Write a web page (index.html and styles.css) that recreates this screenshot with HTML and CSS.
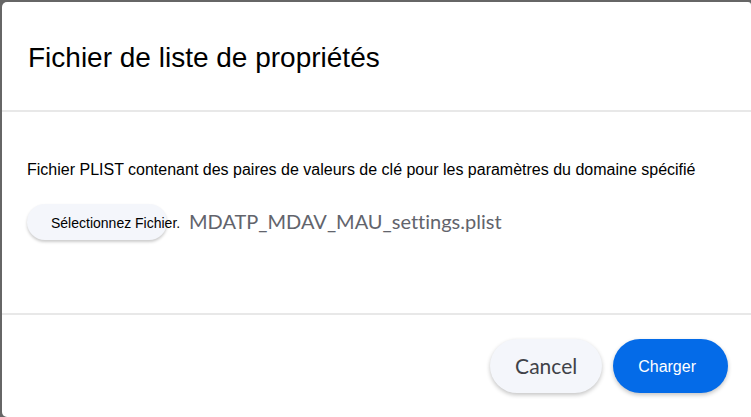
FILE: index.html
```html
<!DOCTYPE html>
<html lang="fr">
<head>
<meta charset="utf-8">
<title>Fichier de liste de propriétés</title>
<link rel="stylesheet" href="styles.css">
</head>
<body>
<main class="dialog" role="dialog" aria-labelledby="title">
  <header class="dialog-header">
    <h1 class="dialog-title" id="title">Fichier de liste de propriétés</h1>
  </header>
  <section class="dialog-body">
    <p class="description" id="description">Fichier PLIST contenant des paires de valeurs de clé pour les paramètres du domaine spécifié</p>
    <div class="file-row">
      <button class="file-button" type="button" aria-describedby="description">Sélectionnez Fichier.</button>
      <span class="file-name">MDATP_MDAV_MAU_settings.plist</span>
    </div>
  </section>
  <footer class="dialog-footer">
    <button class="button button-cancel" type="button">Cancel</button>
    <button class="button button-primary" type="button">Charger</button>
  </footer>
</main>
</body>
</html>
```
FILE: styles.css
```css
* {
  box-sizing: border-box;
}

body {
  margin: 0;
  min-height: 100vh;
  padding: 2px 0 0 2px;
  display: flex;
  background: #666;
  font-family: "Liberation Sans", Arial, sans-serif;
  color: #000;
}

.dialog {
  flex: 1;
  display: flex;
  flex-direction: column;
  background: #fff;
  border-radius: 5px 3px 0 5px;
}

.dialog-header {
  padding: 40px 26px 36px;
  border-bottom: 2px solid #e8e8e8;
}

.dialog-title {
  margin: 0;
  font-size: 28px;
  line-height: 32px;
  font-weight: 400;
}

.dialog-body {
  flex: 1;
  padding: 48px 25px;
}

.description {
  margin: 0 0 24px;
  font-size: 16px;
  line-height: 20px;
}

.file-row {
  display: flex;
  align-items: center;
  gap: 22px;
}

.file-button {
  width: 140px;
  height: 36px;
  padding: 2px 0 0 24px;
  border: 0;
  border-radius: 18px;
  background: #f4f6fb;
  box-shadow: 0 2px 3px #ccc;
  color: #000;
  font: 14px "Liberation Sans", Arial, sans-serif;
  text-align: left;
  white-space: nowrap;
}

.file-name {
  padding-bottom: 2px;
  color: #62646c;
  font: 20px/24px Lato, sans-serif;
  font-variant-ligatures: none;
}

.dialog-footer {
  display: flex;
  justify-content: flex-end;
  gap: 11px;
  padding: 24px 23px;
  border-top: 2px solid #e8e8e8;
}

.button {
  height: 54px;
  border: 0;
  border-radius: 27px;
  box-shadow: 0 2px 4px #c4c4c4;
}

.button-cancel {
  padding: 0 25px 2px;
  background: #f4f6fb;
  color: #404248;
  font: 21px Lato, sans-serif;
}

.button-primary {
  padding: 2px 32px 0 25px;
  background: #046be8;
  color: #fff;
  font: 16px "Liberation Sans", Arial, sans-serif;
}
```
